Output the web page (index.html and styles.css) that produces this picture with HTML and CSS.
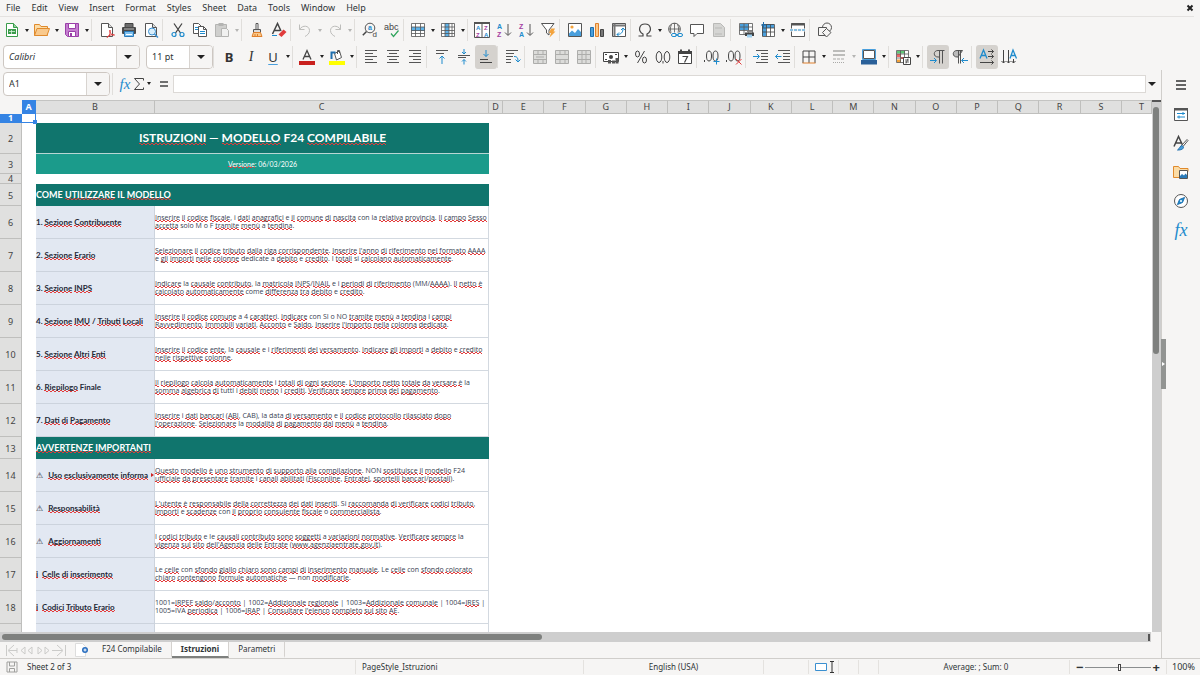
FILE: index.html
```html
<!DOCTYPE html>
<html lang="it">
<head>
<meta charset="utf-8">
<title>Istruzioni — LibreOffice Calc</title>
<link rel="stylesheet" href="styles.css">
</head>
<body>
<nav class="menubar" aria-label="Menu">
  <button>File</button><button>Edit</button><button>View</button><button>Insert</button><button>Format</button><button>Styles</button><button>Sheet</button><button>Data</button><button>Tools</button><button>Window</button><button>Help</button>
  <button class="close" aria-label="Close document"><svg class="close-icon" viewBox="0 0 8 8"><path d="M1.5 1.5l5 5M6.500 1.500l-5 5" stroke="#222" stroke-width="2"/></svg></button>
</nav>

<div class="toolbar standard" role="toolbar" aria-label="Standard">
  <button class="tool" aria-label="New"><svg viewBox="0 0 16 16"><path d="M2.500 1.500h7l4 4v9h-11z" fill="#fff" stroke="#3a9c4a"/><path d="M9.500 1.500v4h4" fill="#8fd19a" stroke="#3a9c4a"/><path d="M4 7h8v5H4z" fill="#3a9c4a"/><path d="M5 9.500h6M7.500 8v4" stroke="#d6f0da" stroke-width=".8"/></svg></button><button class="drop" aria-label="New options"></button>
  <button class="tool" aria-label="Open"><svg viewBox="0 0 16 16"><path d="M.5 13.500v-11h5l1.500 2h6.500v9z" fill="#fbdca6" stroke="#e08a2c"/><path d="M.5 13.500l2.500-7h12.500l-2.500 7z" fill="#f9c98c" stroke="#e08a2c"/></svg></button><button class="drop" aria-label="Open options"></button>
  <button class="tool" aria-label="Save"><svg viewBox="0 0 16 16"><path d="M1.500 1.500h13v13H3.500l-2-2z" fill="#c57fd0" stroke="#9a3fa8"/><path d="M4.500 1.500h7v5h-7z" fill="#fff" stroke="#9a3fa8"/><path d="M4.500 9.500h7v5h-7z" fill="#fff" stroke="#9a3fa8"/><path d="M6 11h2v3H6z" fill="#9a3fa8"/></svg></button><button class="drop" aria-label="Save options"></button>
  <span class="sep"></span>
  <button class="tool" aria-label="Export as PDF"><svg viewBox="0 0 16 16"><path d="M2.500 1.500h7l4 4v9h-11z" fill="#fff" stroke="#555"/><path d="M9.500 1.500v4h4" fill="#ddd" stroke="#555"/><path d="M8 15.500c3-2 3.500-5 3-7.500-1 2 1 5 4.500 5-3-1-6 .5-7.500 2.500z" fill="none" stroke="#e03b3b"/></svg></button>
  <button class="tool" aria-label="Print"><svg viewBox="0 0 16 16"><path d="M4 1.500h8V6H4z" fill="#6d6d6d" stroke="#444"/><rect x="1" y="5" width="14" height="7" rx="1" fill="#4a4a4a"/><path d="M3 7h10" stroke="#bbb"/><path d="M3.500 9.500h9v5h-9z" fill="#7fc0ee" stroke="#2b7bb9"/><path d="M5 12.500h6" stroke="#fff"/></svg></button>
  <button class="tool" aria-label="Print preview"><svg viewBox="0 0 16 16"><path d="M2.500 1.500h7l4 4v9h-11z" fill="#fff" stroke="#555"/><path d="M9.500 1.500v4h4" fill="#ddd" stroke="#555"/><circle cx="9" cy="9.500" r="3.500" fill="#d9eefb" stroke="#3a8fd0"/><path d="M11.500 12l3.500 3.500" stroke="#3a8fd0" stroke-width="1.500"/></svg></button>
  <span class="sep"></span>
  <button class="tool" aria-label="Cut"><svg viewBox="0 0 16 16" fill="none"><path d="M4 1.500l6.500 9.500M12 1.500L5.500 11" stroke="#444" stroke-width="1.300"/><circle cx="4" cy="12.500" r="2" stroke="#1e8bcd" stroke-width="1.200"/><circle cx="12" cy="12.500" r="2" stroke="#1e8bcd" stroke-width="1.200"/></svg></button>
  <button class="tool" aria-label="Copy"><svg viewBox="0 0 16 16"><path d="M1.500 1.500h5l3 3v7h-8z" fill="#fff" stroke="#555"/><path d="M3 5.500h3M3 7.500h3" stroke="#1e8bcd"/><path d="M6.500 4.500h5l3 3v7h-8z" fill="#fff" stroke="#555"/><path d="M11.500 4.500v3h3" fill="none" stroke="#555"/><path d="M8 9.500h5M8 11.500h5" stroke="#1e8bcd"/></svg></button>
  <button class="tool" aria-label="Paste" disabled><svg viewBox="0 0 16 16"><path d="M1.500 2.500h11v12h-11z" fill="#cfcfcd" stroke="#b4b4b2"/><path d="M4.500 1h5v3h-5z" fill="#b4b4b2"/><path d="M7.500 6.500h5l2 2v6h-7z" fill="#f1f1f0" stroke="#b4b4b2"/></svg></button><button class="drop off" aria-label="Paste options" disabled></button>
  <span class="sep"></span>
  <button class="tool" aria-label="Clone formatting"><svg viewBox="0 0 16 16"><path d="M7 1.500h2v6H7z" fill="#fff" stroke="#555"/><path d="M4.500 7.500h7v3h-7z" fill="#ddd" stroke="#555"/><path d="M4.500 10.500h7l1.500 4h-10z" fill="#fbc98a" stroke="#e0802c"/><path d="M6 14v-2M8.500 14v-2" stroke="#e0802c"/></svg></button>
  <button class="tool" aria-label="Clear formatting"><svg viewBox="0 0 16 16"><path d="M1.500 12L6.500 1.500 10 9M3.500 8.500h5.500" fill="none" stroke="#444" stroke-width="1.500"/><path d="M7.500 12.500l5-5 3 2.500-5 5z" fill="#e03b3b"/><path d="M1 13.500h5" stroke="#1e8bcd"/></svg></button>
  <span class="sep narrow"></span>
  <button class="tool" aria-label="Undo" disabled><svg viewBox="0 0 16 16" fill="none" stroke="#bdbdbb"><path d="M2.500 2.500v5h5M2.500 7.500c3-5 10-4 10 1 0 3-2 4.500-4.500 6"/></svg></button><button class="drop off" aria-label="Undo list" disabled></button>
  <button class="tool" aria-label="Redo" disabled><svg viewBox="0 0 16 16" fill="none" stroke="#bdbdbb"><path d="M13.500 2.500v5h-5M13.500 7.500c-3-5-10-4-10 1 0 3 2 4.500 4.500 6"/></svg></button><button class="drop off" aria-label="Redo list" disabled></button>
  <span class="sep"></span>
  <button class="tool" aria-label="Find and replace"><svg viewBox="0 0 16 16" fill="none"><circle cx="8" cy="6" r="4.800" stroke="#555"/><path d="M4.500 9.500L.8 13.200" stroke="#444" stroke-width="1.500"/><text x="6" y="8" font-size="7" fill="#1e8bcd" class="glyph bold">a</text><text x="10.500" y="15" font-size="8" fill="#444" class="glyph">d</text></svg></button>
  <button class="tool" aria-label="Spelling"><svg viewBox="0 0 16 16" fill="none"><text x="0" y="8" font-size="9" fill="#444" class="glyph">abc</text><path d="M7 11.500l2.500 3 5-6" stroke="#2fa45c" stroke-width="1.200"/></svg></button>
  <span class="sep narrow"></span>
  <button class="tool" aria-label="Row"><svg viewBox="0 0 16 16"><path d="M1.500 1.500h13v13h-13z" fill="#fff"/><path d="M1 5h14v4H1z" fill="#5fb2e8"/><path d="M1.500 1.500h13v13h-13zM1.500 5h13M1.500 8.500h13M1.500 11.500h13M5.500 1.500v13M10.500 1.500v13" fill="none" stroke="#555" stroke-width=".8"/></svg></button><button class="drop" aria-label="Row options"></button>
  <button class="tool" aria-label="Column"><svg viewBox="0 0 16 16"><path d="M1.500 1.500h13v13h-13z" fill="#fff"/><path d="M5 1h4v14H5z" fill="#5fb2e8"/><path d="M1.500 1.500h13v13h-13zM1.500 5h13M1.500 8.500h13M1.500 11.500h13M5 1.500v13M9 1.500v13M12 1.500v13" fill="none" stroke="#555" stroke-width=".8"/></svg></button><button class="drop" aria-label="Column options"></button>
  <span class="sep narrow"></span>
  <button class="tool" aria-label="Sort"><svg viewBox="0 0 16 16"><path d="M.5.500h15v15H.5z" fill="#fff" stroke="#555"/><path d="M0 0h16v2H0z" fill="#555"/><path d="M8 1v14" stroke="#555"/><text x="2" y="8" font-size="6" fill="#1e8bcd" class="glyph bold">A</text><text x="2" y="15" font-size="6" fill="#a33ea1" class="glyph bold">Z</text><text x="10" y="8" font-size="6" fill="#a33ea1" class="glyph bold">Z</text><text x="10" y="15" font-size="6" fill="#1e8bcd" class="glyph bold">A</text></svg></button>
  <button class="tool" aria-label="Sort ascending"><svg viewBox="0 0 16 16" fill="none"><text x="1" y="7" font-size="7" fill="#1e8bcd" class="glyph bold">A</text><text x="1" y="15" font-size="7" fill="#a33ea1" class="glyph bold">Z</text><path d="M12 2v11M9 10.500l3 3 3-3" stroke="#555"/></svg></button>
  <button class="tool" aria-label="Sort descending"><svg viewBox="0 0 16 16" fill="none"><text x="1" y="7" font-size="7" fill="#a33ea1" class="glyph bold">Z</text><text x="1" y="15" font-size="7" fill="#1e8bcd" class="glyph bold">A</text><path d="M12 2v11M9 10.500l3 3 3-3" stroke="#555"/></svg></button>
  <button class="tool" aria-label="AutoFilter"><svg viewBox="0 0 16 16"><path d="M1.500 1.500h12.500l-5 6.500v5l-2.500-2V8z" fill="#fff" stroke="#555"/><path d="M11 6.500h4l-1.500 3h2L9.500 15.500l1.500-4.500H9z" fill="#f3a33c"/></svg></button>
  <span class="sep"></span>
  <button class="tool" aria-label="Insert image"><svg viewBox="0 0 16 16"><path d="M1.500 1.500h13v13h-13z" fill="#fff" stroke="#555"/><path d="M2 14v-2.500l3-3 3 2.500 3-4 3 3v4z" fill="#4a9fdc"/><circle cx="5" cy="5" r="1.600" fill="#f3a33c"/></svg></button>
  <button class="tool" aria-label="Insert chart"><svg viewBox="0 0 16 16"><path d="M1.500 5.500h3v9h-3z" fill="#4a9fdc" stroke="#1e6fae"/><path d="M6.500 1.500h3v13h-3z" fill="#fbc98a" stroke="#e0802c"/><path d="M11.500 7.500h3v7h-3z" fill="#777" stroke="#444"/></svg></button>
  <button class="tool" aria-label="Insert pivot table"><svg viewBox="0 0 16 16"><path d="M1.500 1.500h13v13h-13z" fill="#fff" stroke="#555"/><path d="M1.500 3.500h13M3.500 1.500v13" stroke="#777" stroke-width="2"/><path d="M6 12.500c4 0 6-2 6-6M10 8l2-2 2 2M8 10.500l-2 2 2 2" fill="none" stroke="#1e8bcd"/></svg></button>
  <span class="sep narrow"></span>
  <button class="tool" aria-label="Insert special characters"><svg viewBox="0 0 16 16" fill="none" stroke="#444" stroke-width="1.200"><path d="M1.500 14h4.500v-2C.5 9 2 2 8 2s7.500 7 2 10v2h4.500"/></svg></button><button class="drop" aria-label="Special characters options"></button>
  <button class="tool" aria-label="Insert hyperlink"><svg viewBox="0 0 16 16" fill="none"><circle cx="7.500" cy="7" r="5.800" stroke="#555"/><path d="M2 7h11M7.500 1v12M4.500 2.500c-1.500 3-1.500 6 0 9M10.500 2.500c1.500 3 1.500 6 0 9" stroke="#555" stroke-width=".8"/><path d="M4 10.500h12v5H4z" fill="#f6f5f4"/><rect x="4.500" y="11.500" width="5" height="3" rx="1.500" stroke="#1e8bcd"/><rect x="10.500" y="11.500" width="5" height="3" rx="1.500" stroke="#1e8bcd"/><path d="M8 13h4" stroke="#1e8bcd"/></svg></button>
  <button class="tool" aria-label="Insert comment"><svg viewBox="0 0 16 16"><path d="M1.500 2.500h13v9H8l-3 3v-3H1.500z" fill="#fff" stroke="#555"/></svg></button>
  <button class="tool" aria-label="Headers and footers" disabled><svg viewBox="0 0 16 16"><path d="M2.500 1.500h7l4 4v9h-11z" fill="#d5d5d3" stroke="#b9b9b7"/><path d="M4 6h7M4 12h7" stroke="#b9b9b7"/></svg></button>
  <span class="sep"></span>
  <button class="tool" aria-label="Define print area"><svg viewBox="0 0 16 16"><path d="M1.500 1.500h13v11h-13z" fill="#fff"/><path d="M2 2h9v6H2z" fill="#4a9fdc"/><path d="M1.500 1.500h13v11h-13zM1.500 5h13M1.500 8.500h13M6 1.500v11M10.500 1.500v11" fill="none" stroke="#555" stroke-width=".8"/><path d="M7 10.500h9V14H7z" fill="#444"/><path d="M9 8.500h5v2H9z" fill="#888"/><path d="M9 12.500h5V15.500H9z" fill="#9fd0f0"/></svg></button>
  <button class="tool" aria-label="Freeze rows and columns"><svg viewBox="0 0 16 16"><path d="M1.500 2.500h13v12h-13z" fill="#fff"/><path d="M2 2h12v4H2zM2 2h4v12H2z" fill="#4a9fdc"/><path d="M2.500 2.500h12v12h-12zM2.500 6h12M2.500 10h12M6.500 2.500v12M10.500 2.500v12" fill="none" stroke="#444" stroke-width=".8"/><path d="M3.500 0v6M1 3h5" stroke="#1e6fae"/></svg></button><button class="drop" aria-label="Freeze options"></button>
  <button class="tool" aria-label="Split window"><svg viewBox="0 0 16 16" fill="none"><path d="M1.500 6.500v-5h13v5M1.500 9.500v5h13v-5" fill="#fff" stroke="#555"/><path d="M1 2.500h14" stroke="#555" stroke-width="2"/><path d="M0 8h16" stroke="#1e8bcd" stroke-dasharray="3 1"/></svg></button>
  <span class="sep"></span>
  <button class="tool" aria-label="Show draw functions"><svg viewBox="0 0 16 16" fill="#f6f5f4" stroke="#555"><circle cx="10" cy="5.500" r="4.500"/><path d="M1.500 5.500h8v8h-8z"/><path d="M9.500 6.500l4.500 4-4.500 4.500-4-4.500z"/></svg></button>
</div>

<div class="toolbar" role="toolbar" aria-label="Formatting">
  <div class="combo font-name"><input type="text" value="Calibri" aria-label="Font name"><button aria-label="Font list"></button></div>
  <div class="combo font-size"><input type="text" value="11 pt" aria-label="Font size"><button aria-label="Size list"></button></div>
  <span class="sep"></span>
  <button class="tool letter bold" aria-label="Bold">B</button>
  <button class="tool letter italic" aria-label="Italic">I</button>
  <button class="tool letter under" aria-label="Underline">U</button><button class="drop" aria-label="Underline options"></button>
  <span class="sep narrow"></span>
  <button class="tool" aria-label="Font color"><svg viewBox="0 0 16 16"><path d="M4 10.500L8 1.500l4 9M5.500 7.500h5" fill="none" stroke="#444" stroke-width="1.300"/><path d="M0 12h16v4H0z" fill="#c9211e"/></svg></button><button class="drop" aria-label="Font colors"></button>
  <button class="tool" aria-label="Background color"><svg viewBox="0 0 16 16"><path d="M5.500 4.500l5-2.500 2 6.500-5 2.500z" fill="#fff" stroke="#555"/><path d="M8.500 5V1.500h2V4" fill="none" stroke="#555"/><path d="M2.500 10V3.500h4" fill="none" stroke="#1e6fae" stroke-width="2"/><path d="M0 12h16v4H0z" fill="#ff0"/></svg></button><button class="drop" aria-label="Background colors"></button>
  <span class="sep narrow"></span>
  <button class="tool" aria-label="Align left"><svg viewBox="0 0 16 16" stroke="#555"><path d="M2 1.500h12M2 4.500h8M2 7.500h12M2 10.500h8M2 13.500h12"/></svg></button>
  <button class="tool" aria-label="Center"><svg viewBox="0 0 16 16" stroke="#555"><path d="M2 1.500h12M4 4.500h8M2 7.500h12M4 10.500h8M2 13.500h12"/></svg></button>
  <button class="tool" aria-label="Align right"><svg viewBox="0 0 16 16" stroke="#555"><path d="M2 1.500h12M6 4.500h8M2 7.500h12M6 10.500h8M2 13.500h12"/></svg></button>
  <span class="sep"></span>
  <button class="tool" aria-label="Align top"><svg viewBox="0 0 16 16" stroke="#555" fill="none"><path d="M2 1.500h12M2 4.500h8"/><path d="M8 15V7.500M5.500 9.500L8 7l2.500 2.500" stroke="#1e8bcd"/></svg></button>
  <button class="tool" aria-label="Center vertically"><svg viewBox="0 0 16 16" stroke="#555" fill="none"><path d="M2 6.500h12M2 8.500h8"/><path d="M8 0v5M6 3l2 2 2-2M8 15.500v-5M6 12.500l2-2 2 2" stroke="#1e8bcd"/></svg></button>
  <button class="tool active" aria-label="Align bottom" aria-pressed="true"><svg viewBox="0 0 16 16" stroke="#444" fill="none"><path d="M2 10.500h8M2 13.500h12"/><path d="M8 1v6.500M5.500 5L8 7.500 10.500 5" stroke="#1e8bcd"/></svg></button>
  <span class="sep"></span>
  <button class="tool" aria-label="Wrap text"><svg viewBox="0 0 16 16" stroke="#555" fill="none"><path d="M1 1.500h12M1 4.500h8M1 7.500h7M1 10.500h5M1 13.500h5"/><path d="M9 7.500c3 0 4 1 4 5M10.500 10.500l2.500 2.500 2.500-2.500" stroke="#1e8bcd"/></svg></button>
  <span class="sep"></span>
  <button class="tool" aria-label="Merge and center" disabled><svg viewBox="0 0 16 16" fill="#dcdcda" stroke="#adadab"><path d="M1.500 1.500h13v13h-13zM1.500 5.500h13M1.500 10.500h13M6 1.500v4M11 1.500v4M6 10.500v4M11 10.500v4M4 8h8"/></svg></button>
  <button class="tool" aria-label="Merge cells" disabled><svg viewBox="0 0 16 16" fill="#dcdcda" stroke="#adadab"><path d="M1.500 1.500h13v13h-13zM1.500 5.500h13M1.500 10.500h13M6 1.500v4M11 1.500v4M6 10.500v4M11 10.500v4"/></svg></button>
  <button class="tool" aria-label="Split cells" disabled><svg viewBox="0 0 16 16" fill="#dcdcda" stroke="#adadab"><path d="M1.500 1.500h13v13h-13zM1.500 5.500h13M1.500 10.500h13M6 1.500v13M10 1.500v13"/></svg></button>
  <span class="sep"></span>
  <button class="tool" aria-label="Format as currency"><svg viewBox="0 0 16 16"><path d="M.5 3.500h15v9H.5z" fill="#fff" stroke="#444"/><circle cx="8" cy="8" r="2" fill="#444"/><path d="M2 5.500h2M12 5.500h2M2 10.500h2" stroke="#444"/><path d="M9 11.500h3v3H9zM12.500 9h3v5.500h-3zM5 11h3v3.500H5z" fill="#555"/></svg></button><button class="drop" aria-label="Currency options"></button>
  <button class="tool" aria-label="Format as percent"><svg viewBox="0 0 16 16" fill="none" stroke="#444"><ellipse cx="4.500" cy="5" rx="2" ry="3"/><ellipse cx="11.500" cy="11" rx="2" ry="3"/><path d="M11.500 2l-7 12"/></svg></button>
  <button class="tool" aria-label="Format as number"><svg viewBox="0 0 16 16" fill="none" stroke="#444"><ellipse cx="4" cy="8" rx="2.800" ry="5.500"/><ellipse cx="12" cy="8" rx="2.800" ry="5.500"/><path d="M8 12v2.500"/></svg></button>
  <button class="tool" aria-label="Format as date"><svg viewBox="0 0 16 16"><path d="M2 2.500h12.500v12H1.500v-12z" fill="#fff" stroke="#444"/><path d="M1 2h14v3H1z" fill="#444"/><path d="M4 .5v2M12 .5v2" stroke="#444" stroke-width="2"/><path d="M5.500 7.500h5l-3 6" fill="none" stroke="#444" stroke-width="1.200"/></svg></button>
  <span class="sep"></span>
  <button class="tool" aria-label="Add decimal place"><svg viewBox="0 0 16 16" fill="none" stroke="#444"><ellipse cx="5" cy="7" rx="2.500" ry="5"/><ellipse cx="11.500" cy="7" rx="2.500" ry="5"/><path d="M.5 11v2"/><path d="M12.500 9.500v6M9.500 12.500h6" stroke="#1e8bcd"/></svg></button>
  <button class="tool" aria-label="Delete decimal place"><svg viewBox="0 0 16 16" fill="none" stroke="#444"><ellipse cx="5" cy="7" rx="2.500" ry="5"/><ellipse cx="11.500" cy="7" rx="2.500" ry="5"/><path d="M.5 11v2"/><path d="M10 10l5.500 5.500M15.500 10L10 15.500" stroke="#e03b3b"/></svg></button>
  <span class="sep"></span>
  <button class="tool" aria-label="Increase indent"><svg viewBox="0 0 16 16" fill="none" stroke="#555"><path d="M3 1.500h12M8 4.500h7M8 7.500h7M8 10.500h7M3 13.500h12"/><path d="M0 7.500h6M4 5l2.500 2.500L4 10" stroke="#1e8bcd"/></svg></button>
  <button class="tool" aria-label="Decrease indent"><svg viewBox="0 0 16 16" fill="none" stroke="#555"><path d="M3 1.500h12M8 4.500h7M8 7.500h7M8 10.500h7M3 13.500h12"/><path d="M.5 7.500h6M3 5L.5 7.500 3 10" stroke="#1e8bcd"/></svg></button>
  <span class="sep narrow"></span>
  <button class="tool" aria-label="Borders"><svg viewBox="0 0 16 16" fill="none" stroke="#444"><path d="M2 2h12M2 8h12M2 2v12M8 2v12M14 2v12"/><path d="M1.500 14h13" stroke="#e0802c"/></svg></button><button class="drop" aria-label="Border options"></button>
  <button class="tool" aria-label="Border style" disabled><svg viewBox="0 0 16 16" fill="none" stroke="#a9a9a7"><path d="M2 2h12M2 6h12" stroke-width="1.500"/><path d="M2 10h12" stroke-dasharray="3 1"/><path d="M2 13.500h12" stroke-dasharray="1 1"/></svg></button><button class="drop off" aria-label="Border style options" disabled></button>
  <button class="tool" aria-label="Border color"><svg viewBox="0 0 16 16"><path d="M2.500 1.500h11v8h-11z" fill="#fff" stroke="#555"/><path d="M1.500.5h13v10h-13z" fill="none" stroke="#4a9fdc"/><path d="M0 11h16v4.500H0z" fill="#2a6099"/></svg></button><button class="drop" aria-label="Border colors"></button>
  <span class="sep narrow"></span>
  <button class="tool" aria-label="Conditional formatting"><svg viewBox="0 0 16 16"><path d="M1.500 1.500h12v12h-12z" fill="#fff"/><path d="M2 2h8v2.500H2z" fill="#5fc777"/><path d="M2 5h4v3H2zM6 8h4v2H6z" fill="#e66"/><path d="M2 10.500h4v3H2z" fill="#f3a33c"/><path d="M1.500 1.500h12v12h-12zM1.500 5h12M1.500 9h12M5.500 1.500v12M9.500 1.500v12" fill="none" stroke="#555" stroke-width=".8"/><path d="M8.500 8.500h7v7h-7z" fill="#fff" stroke="#444"/><path d="M10 11h4M10 13h4M13 9.500l-2 5" stroke="#444" stroke-width=".8"/></svg></button><button class="drop" aria-label="Conditional options"></button>
  <span class="sep"></span>
  <button class="tool active" aria-label="Left to right" aria-pressed="true"><svg viewBox="0 0 16 16" fill="none" stroke="#555"><path d="M14.500 1.500H8C3 1.500 3 8 8 8h1M9.500 1.500v13M12.500 1.500v13"/><path d="M0 11.500h6M4 9l2.500 2.500L4 14" stroke="#1e8bcd"/></svg></button>
  <button class="tool" aria-label="Right to left"><svg viewBox="0 0 16 16" fill="none" stroke="#555"><path d="M10.500 1.500H5C0 1.500 0 8 5 8h1z" fill="#bbb"/><path d="M6.500 1.500v13M8.500 1.500v13"/><path d="M10 11.500h6M12 9l-2.500 2.500L12 14" stroke="#1e8bcd"/></svg></button>
  <span class="sep"></span>
  <button class="tool active" aria-label="Text direction horizontal" aria-pressed="true"><svg viewBox="0 0 16 16" fill="none"><path d="M1 9.500L4.500 1 8 9.500M2.500 6.500h4" stroke="#1e8bcd" stroke-width="1.300"/><path d="M9 2.500h5.500M9 7.500h5.500M1 13.500h13.500M12.500.5l2 2-2 2M12.500 5.500l2 2-2 2M12.500 11.500l2 2-2 2" stroke="#444"/></svg></button>
  <button class="tool" aria-label="Text direction vertical"><svg viewBox="0 0 16 16" fill="none"><path d="M9 9.500L12 1l3.500 8.500M10.500 6.500h4" stroke="#1e8bcd" stroke-width="1.300"/><path d="M2.500 1v13M7.500 1v13M12.500 10v4M.5 12l2 2 2-2M5.500 12l2 2 2-2M10.500 12l2 2 2-2" stroke="#444"/></svg></button>
</div>

<div class="workspace">
  <main class="document">
    <div class="formula-bar">
      <div class="combo cell-name"><input type="text" value="A1" aria-label="Name box"><button aria-label="Cell names"></button></div>
      <div class="formula-tools">
        <span class="sep"></span>
        <button class="fx" aria-label="Function wizard">fx</button>
        <button class="sigma" aria-label="Select function"><svg viewBox="0 0 12 16" fill="none" stroke="#444"><path d="M10.500 4.500v-2h-9l5 5.500-5 5.500h9v-2"/></svg></button><button class="drop" aria-label="Functions"></button>
        <button class="equals" aria-label="Formula"><svg viewBox="0 0 10 10" stroke="#444" stroke-width="1.500"><path d="M1 3h8M1 7h8"/></svg></button>
      </div>
      <input class="formula" type="text" aria-label="Input line">
      <button class="expand" aria-label="Expand formula bar"></button>
    </div>

    <div class="sheet-area">
      <div class="sheet">
        <table class="grid">
          <colgroup><col class="w-head"><col class="w-narrow"><col class="w-b"><col class="w-c"><col class="w-narrow"><col span="15"><col class="w-last"></colgroup>
          <thead>
            <tr><th class="corner"></th><th class="current">A</th><th>B</th><th>C</th><th>D</th><th>E</th><th>F</th><th>G</th><th>H</th><th>I</th><th>J</th><th>K</th><th>L</th><th>M</th><th>N</th><th>O</th><th>P</th><th>Q</th><th>R</th><th>S</th><th class="clipped">T</th></tr>
          </thead>
          <tbody>
            <tr class="h-gap first"><th class="current">1</th><td class="cursor"></td><td colspan="2"></td></tr>
            <tr class="h-title"><th>2</th><td></td><td colspan="2" class="title"><p>ISTRUZIONI — MODELLO F24 COMPILABILE</p></td></tr>
            <tr class="h-version"><th>3</th><td></td><td colspan="2" class="version"><p>Versione: 06/03/2026</p></td></tr>
            <tr class="h-gap"><th>4</th><td></td><td colspan="2"></td></tr>
            <tr class="h-band"><th>5</th><td></td><td colspan="2" class="band"><p>COME UTILIZZARE IL MODELLO</p></td></tr>
            <tr class="h-item"><th>6</th><td></td><td class="name"><p>1. Sezione Contribuente</p></td><td class="text"><p>Inserire il codice fiscale, i dati anagrafici e il comune di nascita con la relativa provincia. Il campo Sesso<br>accetta solo M o F tramite menù a tendina.</p></td></tr>
            <tr class="h-item"><th>7</th><td></td><td class="name"><p>2. Sezione Erario</p></td><td class="text"><p>Selezionare il codice tributo dalla riga corrispondente. Inserire l'anno di riferimento nel formato AAAA<br>e gli importi nelle colonne dedicate a debito e credito. I totali si calcolano automaticamente.</p></td></tr>
            <tr class="h-item"><th>8</th><td></td><td class="name"><p>3. Sezione INPS</p></td><td class="text"><p>Indicare la causale contributo, la matricola INPS/INAIL e i periodi di riferimento (MM/AAAA). Il netto è<br>calcolato automaticamente come differenza tra debito e credito.</p></td></tr>
            <tr class="h-item"><th>9</th><td></td><td class="name"><p>4. Sezione IMU / Tributi Locali</p></td><td class="text"><p>Inserire il codice comune a 4 caratteri. Indicare con SI o NO tramite menù a tendina i campi<br>Ravvedimento, Immobili variati, Acconto e Saldo. Inserire l'importo nella colonna dedicata.</p></td></tr>
            <tr class="h-item"><th>10</th><td></td><td class="name"><p>5. Sezione Altri Enti</p></td><td class="text"><p>Inserire il codice ente, la causale e i riferimenti del versamento. Indicare gli importi a debito e credito<br>nelle rispettive colonne.</p></td></tr>
            <tr class="h-item"><th>11</th><td></td><td class="name"><p>6. Riepilogo Finale</p></td><td class="text"><p>Il riepilogo calcola automaticamente i totali di ogni sezione. L'importo netto totale da versare è la<br>somma algebrica di tutti i debiti meno i crediti. Verificare sempre prima del pagamento.</p></td></tr>
            <tr class="h-item"><th>12</th><td></td><td class="name"><p>7. Dati di Pagamento</p></td><td class="text"><p>Inserire i dati bancari (ABI, CAB), la data di versamento e il codice protocollo rilasciato dopo<br>l'operazione. Selezionare la modalità di pagamento dal menù a tendina.</p></td></tr>
            <tr class="h-band"><th>13</th><td></td><td colspan="2" class="band"><p>AVVERTENZE IMPORTANTI</p></td></tr>
            <tr class="h-item"><th>14</th><td></td><td class="name overflowing"><p><span class="warn">⚠</span>Uso esclusivamente informa</p></td><td class="text"><p>Questo modello è uno strumento di supporto alla compilazione. NON sostituisce il modello F24<br>ufficiale da presentare tramite i canali abilitati (Fisconline, Entratel, sportelli bancari/postali).</p></td></tr>
            <tr class="h-item"><th>15</th><td></td><td class="name"><p><span class="warn">⚠</span>Responsabilità</p></td><td class="text"><p>L'utente è responsabile della correttezza dei dati inseriti. Si raccomanda di verificare codici tributo,<br>importi e scadenze con il proprio consulente fiscale o commercialista.</p></td></tr>
            <tr class="h-item"><th>16</th><td></td><td class="name"><p><span class="warn">⚠</span>Aggiornamenti</p></td><td class="text"><p>I codici tributo e le causali contributo sono soggetti a variazioni normative. Verificare sempre la<br>vigenza sul sito dell'Agenzia delle Entrate (www.agenziaentrate.gov.it).</p></td></tr>
            <tr class="h-item"><th>17</th><td></td><td class="name"><p><span class="info">ℹ</span>Celle di inserimento</p></td><td class="text"><p>Le celle con sfondo giallo chiaro sono campi di inserimento manuale. Le celle con sfondo colorato<br>chiaro contengono formule automatiche — non modificarle.</p></td></tr>
            <tr class="h-item"><th>18</th><td></td><td class="name"><p><span class="info">ℹ</span>Codici Tributo Erario</p></td><td class="text"><p>1001=IRPEF saldo/acconto | 1002=Addizionale regionale | 1003=Addizionale comunale | 1004=IRES |<br>1005=IVA periodica | 1006=IRAP | Consultare l'elenco completo sul sito AE.</p></td></tr>
            <tr class="h-item"><th></th><td></td><td class="name"></td><td class="text"></td></tr>
          </tbody>
        </table>
      </div>
      <div class="vscroll"><div class="vthumb"></div></div>
    </div>
    <div class="hscroll"><div class="hthumb"></div><span class="hsplit"></span></div>

    <div class="tabbar">
      <svg class="tab-nav" viewBox="0 0 62 14" fill="none" stroke="#cbcbc9"><path d="M1.500 2v11M9 2L3 7.500 9 13M4 7.500h8M12 5v5M20 4l-4 3.500 4 3.500zM27 4l-4 3.500 4 3.500zM33 4l4 3.500-4 3.500zM40 4l4 3.500-4 3.500zM47 7.500h10M52 2l6 5.500-6 5.500M60.500 2v11"/></svg>
      <button class="add-sheet" aria-label="Add sheet"><svg viewBox="0 0 16 16"><path d="M1.500 1.500h7l3 3v10h-10z" fill="#fff" stroke="#ddd"/><circle cx="11" cy="8" r="3" fill="#2a6fc0"/><path d="M11 6.500v3M9.500 8h3" stroke="#fff"/></svg></button>
      <button class="tab">F24 Compilabile</button>
      <button class="tab selected">Istruzioni</button>
      <button class="tab">Parametri</button>
    </div>
  </main>

  <aside class="sidebar">
    <span class="splitter"></span>
    <button aria-label="Sidebar settings"><svg viewBox="0 0 16 16" stroke="#333" stroke-width="1.500"><path d="M3 4h10M3 8h10M3 12h10"/></svg></button>
    <button aria-label="Properties"><svg viewBox="0 0 16 16"><path d="M1.500 2.500h13v12h-13z" fill="#fff" stroke="#555"/><path d="M1 2h14v2.500H1z" fill="#555"/><path d="M4 7.500h8M4 11h8M10 6v3M6 9.500v3" stroke="#1e8bcd"/></svg></button>
    <button aria-label="Styles"><svg viewBox="0 0 16 16" fill="none"><path d="M1 11.500L5.500 1.500 10 11M3 8h5" stroke="#444" stroke-width="1.500"/><path d="M15 5.500l-5 6-1.500-1 5.500-6z" fill="#fff" stroke="#555"/><path d="M9 10.500c-2 0-2 3-4.500 4.500 4 0 6-1 6-3z" fill="#4a9fdc" stroke="#1e6fae"/></svg></button>
    <button aria-label="Gallery"><svg viewBox="0 0 16 16"><path d="M.5 13.500v-11h5l1.500 2h8v3h-8v6z" fill="#fbdca6" stroke="#e08a2c"/><path d="M6.500 6.500h8v8h-8z" fill="#fff" stroke="#555"/><path d="M7 14v-2l2-2 2 1.500 1.500-2 1.500 1.500v3z" fill="#2b7bb9"/></svg></button>
    <button aria-label="Navigator"><svg viewBox="0 0 16 16"><circle cx="8" cy="8" r="6.500" fill="#fff" stroke="#555"/><path d="M11.500 4.500L9.500 9.500l-5 2 2-5z" fill="#1e8bcd" stroke="#1e6fae"/><circle cx="8" cy="8" r="1" fill="#fff"/></svg></button>
    <button class="fx large" aria-label="Functions">fx</button>
  </aside>
</div>

<footer class="statusbar">
  <svg class="disk" viewBox="0 0 12 12" fill="none" stroke="#a0a09e"><path d="M1 1h10v10H1zM3.500 1v4h5V1M3.500 11V7.500h5V11"/></svg>
  <span class="sheet-count">Sheet 2 of 3</span>
  <span class="page-style">PageStyle_Istruzioni</span>
  <span class="language">English (USA)</span>
  <span class="blank"></span>
  <span class="modes"><svg viewBox="0 0 20 12" fill="none"><path d="M.5 2.500h11v7H.5z" fill="#fff" stroke="#3a8fd0"/><path d="M15 .5h4M17 .5v11M15 11.500h4" stroke="#333"/></svg></span>
  <span class="cell"></span><span class="cell"></span>
  <span class="summary">Average: ; Sum: 0</span>
  <span class="zoom"><button aria-label="Zoom out">−</button><input type="range" min="0" max="200" value="104" aria-label="Zoom"><button aria-label="Zoom in">+</button></span>
  <span class="percent">100%</span>
</footer>
<script src="spellcheck.js"></script>
</body>
</html>
```

FILE: styles.css
```css
* { box-sizing: border-box; }

body {
  margin: 0;
  height: 100vh;
  display: flex;
  flex-direction: column;
  overflow: hidden;
  background: #f6f5f4;
  color: #2e3436;
  font: 9px/12px "Noto Sans", sans-serif;
}

button, input {
  margin: 0;
  padding: 0;
  border: 0;
  background: none;
  color: inherit;
  font: inherit;
}

svg { display: block; overflow: visible; }
.glyph { font-family: "Liberation Sans", sans-serif; }
.bold { font-weight: bold; }

/* Menu */
.menubar {
  display: flex;
  gap: 11px;
  height: 17px;
  padding: 0 0 0 6px;
  margin-right: 6px;
  flex: none;
  align-items: center;
  border-bottom: 1px solid #e4e2e0;
}
.close { margin-left: auto; }
.close-icon { width: 8px; height: 8px; }

/* Toolbars */
.toolbar {
  display: flex;
  flex: none;
  align-items: center;
  height: 27px;
  padding-left: 1px;
}
.toolbar.standard { height: 26px; }
.tool {
  width: 22px;
  height: 24px;
  flex: none;
  display: flex;
  align-items: center;
  justify-content: center;
  border-radius: 3px;
}
.tool svg { width: 16px; height: 16px; }
.tool.active { background: #d5d2ce; }
.sep {
  flex: none;
  width: 5px;
  height: 22px;
  border-left: 1px solid #e0dedb;
}
.sep.narrow { width: 4px; }
.drop {
  flex: none;
  width: 8px;
  height: 22px;
  display: flex;
  align-items: center;
  justify-content: center;
}
.drop::after, .combo button::after, .expand::after {
  content: "";
  border: 2px solid transparent;
  border-top: 3px solid #222;
  border-bottom: 0;
}
.drop.off::after { border-top-color: #b5b5b3; }
.combo button::after, .expand::after { border-width: 4px 4px 0; }

.combo {
  display: flex;
  flex: none;
  height: 24px;
  border: 1px solid #cdc7c2;
  border-radius: 4px;
  background: #fff;
  overflow: hidden;
}
.combo input { flex: 1; min-width: 0; padding-left: 5px; }
.combo button {
  width: 23px;
  display: flex;
  align-items: center;
  justify-content: center;
  border-left: 1px solid #d8d4d0;
  background: #f6f5f4;
}
.font-name { width: 137px; margin: 0 6px 0 2px; font-style: italic; }
.font-size { width: 67px; }
.cell-name { width: 107px; }

.letter { font-size: 13px; line-height: 16px; color: #333; }
.letter.italic { font-family: "Liberation Serif", serif; font-style: italic; font-size: 14px; }
.letter.under { text-decoration: underline #4a9fdc; text-underline-offset: 2px; }

/* Document area */
.workspace { flex: 1; min-height: 0; display: flex; }
.document { flex: 1; min-width: 0; display: flex; flex-direction: column; }

.formula-bar {
  display: flex;
  flex: none;
  align-items: center;
  height: 27px;
  margin-bottom: 3px;
  padding-left: 3px;
}
.formula-tools { display: flex; align-items: center; width: 63px; padding-left: 2px; }
.fx {
  width: 16px;
  color: #1e8bcd;
  font: italic 15px/16px "Liberation Serif", serif;
}
.sigma { width: 12px; }
.sigma svg { width: 12px; height: 16px; }
.equals { margin-left: 6px; }
.equals svg { width: 10px; height: 10px; }
.formula {
  flex: 1;
  min-width: 0;
  height: 18px;
  padding: 0 4px;
  border: 1px solid #dcd9d6;
  background: #fff;
}
.expand { width: 15px; height: 18px; padding-left: 2px; display: flex; align-items: center; }

.sheet-area { flex: 1; min-height: 0; display: flex; background: #fff; }
.sheet { flex: 1; min-width: 0; overflow: hidden; }
.grid {
  width: 100%;
  table-layout: fixed;
  border-collapse: separate;
  border-spacing: 0;
}
.w-head { width: 22px; }
.w-narrow { width: 14px; }
.w-b { width: 119px; }
.w-c { width: 334px; }
.w-last { width: 30px; }
.grid th, .grid td { padding: 0; }
.grid th {
  background: #e0e0df;
  border-right: 1px solid #bfbfbd;
  border-bottom: 1px solid #bfbfbd;
  color: #444;
  font-weight: normal;
  line-height: 8px;
}
.grid .h-title th, .grid .h-version th, .grid .h-band th, .grid .h-item th { padding-top: 2px; }
.grid thead th { height: 14px; border-top: 1px solid #c4c4c2; }
.grid thead .corner { background: #f6f5f4; border-color: transparent; }
.grid thead .clipped { padding-left: 10px; }
.grid th.current { background: #3584e4; color: #fff; font-weight: bold; border-color: #3584e4; }
.grid p { margin: 0; white-space: nowrap; }
.h-gap { height: 10px; }
.h-gap.first { height: 9px; }
.h-title { height: 31px; }
.h-version { height: 20px; }
.h-band { height: 22px; }
.h-item { height: 33px; }

.cursor { position: relative; border-right: 1px solid #3584e4; border-bottom: 1px solid #3584e4; }
.cursor::after {
  content: "";
  position: absolute;
  right: -2px;
  bottom: -2px;
  width: 4px;
  height: 4px;
  background: #3584e4;
}

.grid td { font-family: Lato, sans-serif; }
.grid .title {
  background: #10756d;
  border-bottom: 1px solid #b8d6d3;
  color: #fff;
  font-size: 12px;
  font-weight: bold;
  line-height: 16px;
  text-align: center;
}
.grid .version { background: #1b9b8b; color: #fff; font-size: 7px; line-height: 10px; text-align: center; }
.grid .band { background: #10756d; color: #fff; font-weight: bold; }
.grid .name {
  background: #e2e8f2;
  border-right: 1px solid #ccd3dd;
  border-bottom: 1px solid #ccd3dd;
  color: #1f2937;
  font-size: 8px;
  font-weight: bold;
}
.grid .text {
  border-right: 1px solid #d3d9e0;
  border-bottom: 1px solid #d3d9e0;
  color: #374151;
  font-family: "Open Sans", Lato, sans-serif;
  font-size: 7px;
  line-height: 8px;
}
.warn { font-family: "DejaVu Sans", sans-serif; font-weight: normal; margin-right: 5px; }
.info { margin-right: 4px; }
.overflowing { position: relative; }
.overflowing::after {
  content: "";
  position: absolute;
  right: 0;
  top: 14px;
  border: 2px solid transparent;
  border-left: 3px solid #c22;
  border-right: 0;
}
.typo {
  background:
    linear-gradient(90deg, #e23b3b 50%, transparent 0) 0 calc(100% - 1px) / 4px 1px repeat-x,
    linear-gradient(90deg, transparent 50%, #e23b3b 0) 0 100% / 4px 1px repeat-x;
}

/* Scrollbars */
.vscroll { width: 9px; padding: 5px 2px 0 1px; background: #cecece; border-top: 2px solid #555; }
.vthumb { height: 47%; border-radius: 3px; background: #7e807e; }
.hscroll {
  flex: none;
  height: 10px;
  margin-right: 10px;
  display: flex;
  align-items: center;
  justify-content: space-between;
  padding: 0 1px 0 2px;
  background: #cecece;
}
.hthumb { width: 47%; height: 6px; border-radius: 3px; background: #7e807e; }
.hsplit { width: 2px; height: 7px; background: #555; }

/* Sheet tabs */
.tabbar { flex: none; height: 16px; display: flex; align-items: center; padding-left: 5px; font-size: 8px; }
.tab-nav { width: 62px; height: 14px; margin-right: 7px; }
.add-sheet { margin-right: 3px; }
.add-sheet svg { width: 16px; height: 16px; }
.tab {
  height: 16px;
  padding: 0 9px;
  border-right: 1px solid #d5d2cf;
  border-bottom: 2px solid transparent;
}
.tab.selected { background: #fff; font-weight: bold; border-bottom-color: #7e807e; }

/* Sidebar */
.sidebar {
  position: relative;
  flex: none;
  width: 39px;
  padding-top: 5px;
  display: flex;
  flex-direction: column;
  align-items: center;
  gap: 9px;
  border-left: 1px solid #d0cecb;
}
.sidebar button { width: 20px; height: 20px; display: flex; align-items: center; justify-content: center; }
.sidebar svg { width: 16px; height: 16px; }
.sidebar .large { font-size: 18px; }
.splitter {
  position: absolute;
  left: -1px;
  top: 269px;
  width: 5px;
  height: 50px;
  background: #929492;
}
.splitter::after {
  content: "";
  position: absolute;
  left: 1px;
  top: 23px;
  border: 2px solid transparent;
  border-left: 3px solid #fff;
  border-right: 0;
}

/* Status bar */
.statusbar {
  flex: none;
  height: 17px;
  display: flex;
  align-items: center;
  padding-left: 6px;
  border-top: 1px solid #d0cecb;
  font-size: 8px;
}
.statusbar > span {
  flex: none;
  height: 14px;
  line-height: 14px;
  border-right: 1px solid #e4e2df;
}
.disk { width: 12px; height: 12px; margin-right: 9px; }
.sheet-count { width: 329px; }
.page-style { width: 228px; padding-left: 6px; }
.language { width: 180px; text-align: center; }
.blank { width: 45px; }
.modes { width: 30px; padding: 1px 0 0 6px; }
.modes svg { width: 20px; height: 12px; }
.cell { width: 20px; }
.statusbar > .summary { flex: 1; padding-left: 4px; text-align: center; }
.zoom { width: 97px; display: flex; align-items: center; justify-content: space-between; padding: 0 6px; }
.zoom button { font-size: 13px; font-weight: bold; }
.zoom input { width: 66px; height: 10px; appearance: none; }
.zoom input::-webkit-slider-runnable-track { height: 1px; background: #8b8e8f; }
.zoom input::-webkit-slider-thumb {
  appearance: none;
  width: 3px;
  height: 7px;
  margin-top: -3px;
  border: 1px solid #444;
  background: #fff;
}
.statusbar > .percent { width: 33px; padding-left: 5px; border: 0; font-size: 9px; }
```

FILE: spellcheck.js
```js
// Underlines every word of the sheet that the English dictionary lacks.
const known = new Set(
  "a e i o m f la le con solo come dedicate data cab non finale si no iva mm tutti IL".split(" ")
);
const isKnown = (word) => known.has(word) || (word !== "Il" && known.has(word.toLowerCase()));

document.querySelectorAll(".grid td p").forEach((cell) => {
  const walker = document.createTreeWalker(cell, NodeFilter.SHOW_TEXT);
  const nodes = [];
  while (walker.nextNode()) nodes.push(walker.currentNode);
  nodes.forEach((node) => {
    const out = document.createDocumentFragment();
    node.data.split(/([\p{L}ℹ][\p{L}\d'.]*[\p{L}]|[\p{L}ℹ])/u).forEach((part) => {
      const isWord = /^[\p{L}ℹ]/u.test(part);
      if (isWord && !isKnown(part)) {
        const mark = document.createElement("span");
        mark.className = "typo";
        mark.textContent = part;
        out.append(mark);
      } else {
        out.append(part);
      }
    });
    node.replaceWith(out);
  });
});
```
